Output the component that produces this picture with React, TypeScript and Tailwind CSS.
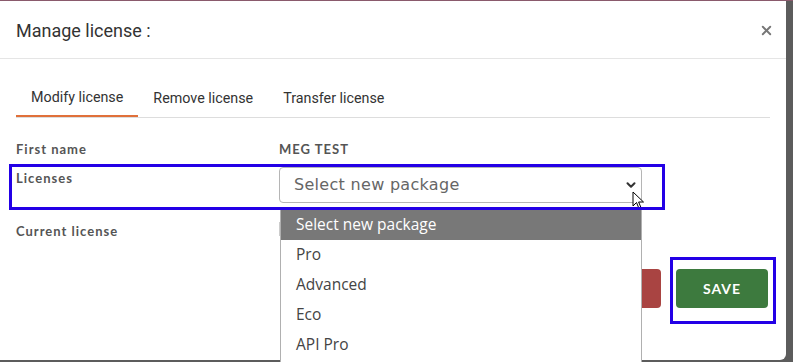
import React from 'react';
import { X, ChevronDown } from 'lucide-react';

const tabs = ['Modify license', 'Remove license', 'Transfer license'];
const options = ['Select new package', 'Pro', 'Advanced', 'Eco', 'API Pro'];

const labelCls = "font-['Lato',sans-serif] font-bold text-[13px] tracking-[1px] text-[#555]";

const App: React.FC = () => {
    return (
        <div className="w-[793px] h-[362px] bg-[#5c5c5c] border-t border-[#8a5a6c] relative overflow-hidden">
            <div className="w-[786px] h-[359px] bg-white rounded-br-md flex flex-col">
                {/* Header */}
                <div className="h-[58px] px-4 flex items-center justify-between border-b border-[#e5e5e5]">
                    <h2 className="font-['Roboto',sans-serif] text-[18px] text-[#333] pt-[2px]">Manage license :</h2>
                    <button className="text-[#777] -mr-[4px] mt-[1px]">
                        <X size={15} strokeWidth={3} />
                    </button>
                </div>

                <div className="px-4 flex flex-col">
                    {/* Tabs */}
                    <div className="mt-[21px] flex border-b border-[#ddd] font-['Roboto',sans-serif] text-[14.3px] text-[#333]">
                        {tabs.map((t, i) => (
                            <div
                                key={t}
                                className={`h-[37px] px-[15px] flex items-center ${i === 0 ? 'border-b-2 border-[#e0703a] -mb-px' : ''}`}
                            >
                                {t}
                            </div>
                        ))}
                    </div>

                    {/* Form */}
                    <div className="mt-[22px] grid grid-cols-[263px_1fr] items-start">
                        <div className={labelCls}>First name</div>
                        <div className={labelCls}>MEG TEST</div>

                        <div className={`${labelCls} mt-[9px]`}>Licenses</div>
                        <div className="mt-[7px] w-[363px] h-[36px] border border-[#b5b5b5] rounded-[4px] pl-[14px] pr-[3px] flex items-center justify-between font-['DejaVu_Sans',sans-serif] text-[16px] tracking-[0.3px] text-[#666]">
                            <span>Select new package</span>
                            <ChevronDown size={14} strokeWidth={3.5} className="text-[#333]" />
                        </div>

                        <div className={`${labelCls} mt-[19px]`}>Current license</div>
                        <div className="mt-[19px] h-[14px] w-[2px] bg-[#ccc]" />
                    </div>

                    {/* Buttons */}
                    <div className="mt-[28px] flex justify-end gap-[15px] pr-[2px] font-['Lato',sans-serif]">
                        <button className="w-[110px] h-[39px] rounded-[4px] bg-[#a94442] text-white font-bold text-[13px] tracking-[1px]">CANCEL</button>
                        <button className="w-[92px] h-[39px] rounded-[4px] bg-[#3d7a3e] text-white font-bold text-[14px] tracking-[1px]">SAVE</button>
                    </div>
                </div>
            </div>

            {/* Open dropdown list */}
            <div className="absolute left-[280px] top-[209px] w-[362px] h-[160px] bg-white border-x border-[#b0b0b0] font-['Open_Sans',sans-serif] text-[15.5px] text-[#444]">
                {options.map((o, i) => (
                    <div
                        key={o}
                        className={`h-[30px] px-[15px] flex items-center ${i === 0 ? 'bg-[#787878] text-white' : ''}`}
                    >
                        {o}
                    </div>
                ))}
            </div>

            {/* Mouse cursor */}
            <svg className="absolute left-[632px] top-[190px]" width="13" height="19" viewBox="0 0 13 19">
                <path d="M1 1 L1 15 L4.5 11.5 L7 17.5 L9 16.6 L6.6 11 L11.5 11 Z" fill="white" stroke="black" strokeWidth="1" strokeLinejoin="round" />
            </svg>

            {/* Annotation boxes */}
            <div className="absolute left-[9px] top-[163px] w-[656px] h-[46px] border-[3px] border-[#2300e6]" />
            <div className="absolute left-[670px] top-[256px] w-[106px] h-[67px] border-[3px] border-[#2300e6]" />
        </div>
    );
};

export default App;
